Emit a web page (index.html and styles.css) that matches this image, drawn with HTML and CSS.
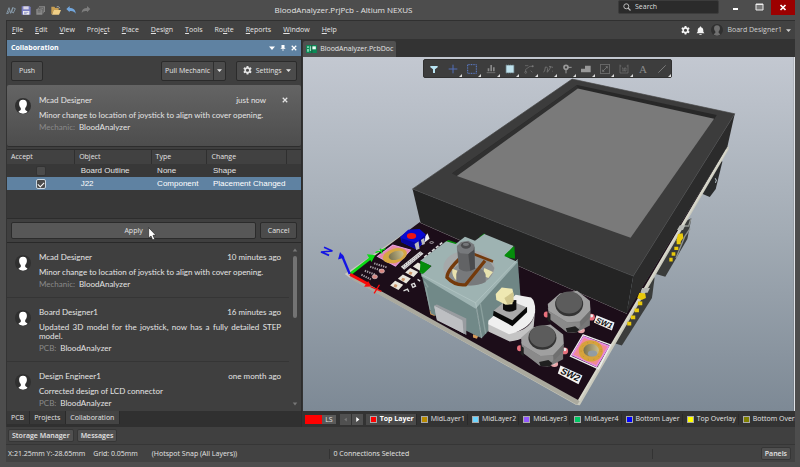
FILE: index.html
```html
<!DOCTYPE html>
<html lang="en">
<head>
<meta charset="utf-8">
<title>BloodAnalyzer.PrjPcb - Altium NEXUS</title>
<link rel="stylesheet" href="styles.css">
</head>
<body>
<svg class="defs" aria-hidden="true">
  <symbol id="person" viewBox="0 0 16 16">
    <path d="M8 1.800c2.500 0 3.900 1.600 3.900 4 0 2-.8 3.300-1.700 4.200v1.800c.3 1 2 1 2.300 2.300a7.500 7.500 0 0 1-9 0c.3-1.300 2-1.300 2.300-2.300V10C4.900 9.100 4.100 7.800 4.100 5.800c0-2.400 1.400-4 3.900-4z"/>
  </symbol>
  <symbol id="gear" viewBox="0 0 16 16">
    <path fill-rule="evenodd" d="M6.500 0h3l.5 2.300 1.500.9 2.300-.8 1.500 2.700-1.800 1.600v1.800l1.800 1.600-1.500 2.700-2.300-.8-1.500.9-.5 2.300h-3L6 12.900l-1.500-.9-2.300.8-1.500-2.700 1.800-1.600V6.700L.7 5.100l1.500-2.700 2.300.8L6 2.300zM8 4.800a2.800 2.800 0 1 0 0 5.600 2.800 2.800 0 0 0 0-5.600z"/>
  </symbol>
  <symbol id="caret" viewBox="0 0 8 8"><path d="M0 2h8L4 6.500z"/></symbol>
  <symbol id="close" viewBox="0 0 8 8"><path d="M1 1l6 6M7 1L1 7" fill="none" stroke="currentColor" stroke-width="1.600"/></symbol>
</svg>

<div class="app">
  <header class="titlebar">
    <div class="quick">
      <svg viewBox="0 0 30 27"><path d="M2 23L9 5l5 17 6-17 8 3-6 13-4-3M2 23l5-1 3-8M20 5l-3 14" fill="none" stroke="#8fa3b5" stroke-width="2.500"/></svg>
      <svg viewBox="0 0 30 27"><path d="M2 1h24l3 3v22H2z" fill="#777bc0"/><path d="M7 1h16v9H7z" fill="#d9d5e6"/><path d="M6 15h19v11H6z" fill="#eee"/><path d="M9 19h13M9 23h8" stroke="#777bc0" stroke-width="2"/></svg>
      <svg viewBox="0 0 30 27"><path d="M9 1h18v17h-4v4h-4v4H1V9h4V5h4z" fill="#8b8b8b"/><path d="M5 9h14v12M9 5h14v12M5 14h9M5 18h9M11 9V5" fill="none" stroke="#444" stroke-width="1.500"/></svg>
      <svg viewBox="0 0 30 27"><path d="M1 2h9l3 4h10v6H8L3 25H1z" fill="#c99f52"/><path d="M8 12h22l-6 14H3z" fill="#f1cf86"/><path d="M17 3c5-3 8 0 9 4" fill="none" stroke="#ddd" stroke-width="2"/></svg>
      <svg viewBox="0 0 30 27"><path d="M1 9L11 0v6c10 0 18 5 18 17-4-7-9-9-18-8v4z" fill="#72a6dc"/></svg>
      <svg viewBox="0 0 30 27"><path d="M28 9L18 0v6C8 6 2 11 2 21c3-5 7-7 16-6v4z" fill="#7d7d7d"/></svg>
    </div>
    <h1 class="title">BloodAnalyzer.PrjPcb - Altium NEXUS</h1>
    <div class="winside">
      <label class="search">
        <svg viewBox="0 0 8 8"><circle cx="3.300" cy="3.300" r="2.500" fill="none" stroke="#bbb"/><path d="M5 5l2.500 2.500" stroke="#bbb" stroke-width="1.300"/></svg>
        <input type="text" placeholder="Search" aria-label="Search">
      </label>
      <button class="win" aria-label="Minimize"><svg viewBox="0 0 24 15"><path d="M10 8h5v2h-5z" fill="#fff"/></svg></button>
      <button class="win" aria-label="Maximize"><svg viewBox="0 0 24 15"><path d="M9 4h7v6H9z" fill="#777" stroke="#eee"/><path d="M9 4.500h7" stroke="#eee"/></svg></button>
      <button class="win win-close" aria-label="Close"><svg viewBox="0 0 24 15"><path d="M9.500 5l5 5m0-5l-5 5" stroke="#fff" stroke-width="1.700"/></svg></button>
    </div>
  </header>

  <nav class="menubar">
    <div class="menus">
      <a href="#"><u>F</u>ile</a><a href="#"><u>E</u>dit</a><a href="#"><u>V</u>iew</a><a href="#">Proje<u>c</u>t</a><a href="#"><u>P</u>lace</a><a href="#"><u>D</u>esign</a><a href="#"><u>T</u>ools</a><a href="#">Ro<u>u</u>te</a><a href="#"><u>R</u>eports</a><a href="#"><u>W</u>indow</a><a href="#"><u>H</u>elp</a>
    </div>
    <div class="account">
      <svg class="ic9" viewBox="0 0 16 16"><use href="#gear"/></svg>
      <svg class="ic9" viewBox="0 0 16 16"><path d="M7 1h2v1c3 .5 4 3 4 6v2l2 3H1l2-3V8c0-3 1-5.500 4-6zM6 14h4v1.500H6z"/></svg>
      <span class="user"><svg class="avatar avatar-sm" viewBox="0 0 16 16"><use href="#person"/></svg>Board Designer1 <svg class="caret" viewBox="0 0 8 8"><use href="#caret"/></svg></span>
    </div>
  </nav>

  <main class="work">
    <section class="panel">
      <header class="panel-head">
        <h2>Collaboration</h2>
        <svg viewBox="0 0 8 8"><use href="#caret"/></svg>
        <svg viewBox="0 0 8 8"><path d="M2 0h4v4h1v1H4.500v3h-1V5H1V4h1z"/></svg>
        <svg viewBox="0 0 8 8"><use href="#close"/></svg>
      </header>
      <div class="tools">
        <button class="btn push">Push</button>
        <span class="split"><button>Pull Mechanic</button><button aria-label="More pull options"><svg class="caret" viewBox="0 0 8 8"><use href="#caret"/></svg></button></span>
        <button class="btn settings"><svg class="ic9" viewBox="0 0 16 16"><use href="#gear"/></svg>Settings<svg class="caret" viewBox="0 0 8 8"><use href="#caret"/></svg></button>
      </div>

      <article class="note current">
        <svg class="avatar" viewBox="0 0 16 16"><use href="#person"/></svg>
        <div class="note-body">
          <div class="note-top"><b>Mcad Designer</b><time>just now</time></div>
          <p>Minor change to location of joystick to align with cover opening.</p>
          <div class="meta"><span>Mechanic:</span>BloodAnalyzer</div>
        </div>
        <button class="dismiss" aria-label="Dismiss"><svg viewBox="0 0 8 8"><use href="#close"/></svg></button>
      </article>

      <div class="changes">
        <table>
          <colgroup><col class="c1"><col class="c2"><col class="c3"><col class="c4"><col class="c5"></colgroup>
          <thead><tr><th>Accept</th><th>Object</th><th>Type</th><th>Change</th><th></th></tr></thead>
          <tbody>
            <tr><td><input type="checkbox" aria-label="Accept Board Outline"></td><td>Board Outline</td><td>None</td><td>Shape</td><td></td></tr>
            <tr class="sel"><td><input type="checkbox" aria-label="Accept J22" checked></td><td>J22</td><td>Component</td><td>Placement Changed</td><td></td></tr>
          </tbody>
        </table>
      </div>
      <div class="actions">
        <button class="btn apply">Apply
          <svg class="cursor" viewBox="0 0 24 42"><path d="M2 2v31l7-6 5 12 6-3-5-11h9z" fill="#fff" stroke="#222" stroke-width="2"/></svg>
        </button>
        <button class="btn cancel">Cancel</button>
      </div>

      <div class="history">
        <div class="notes">
          <article class="note">
            <svg class="avatar" viewBox="0 0 16 16"><use href="#person"/></svg>
            <div class="note-body">
              <div class="note-top"><b>Mcad Designer</b><time>10 minutes ago</time></div>
              <p>Minor change to location of joystick to align with cover opening.</p>
              <div class="meta"><span>Mechanic:</span>BloodAnalyzer</div>
            </div>
          </article>
          <article class="note">
            <svg class="avatar" viewBox="0 0 16 16"><use href="#person"/></svg>
            <div class="note-body">
              <div class="note-top"><b>Board Designer1</b><time>16 minutes ago</time></div>
              <p>Updated 3D model for the joystick, now has a fully detailed STEP model.</p>
              <div class="meta"><span>PCB:</span>BloodAnalyzer</div>
            </div>
          </article>
          <article class="note">
            <svg class="avatar" viewBox="0 0 16 16"><use href="#person"/></svg>
            <div class="note-body">
              <div class="note-top"><b>Design Engineer1</b><time>one month ago</time></div>
              <p>Corrected design of LCD connector</p>
              <div class="meta"><span>PCB:</span>BloodAnalyzer</div>
            </div>
          </article>
        </div>
        <div class="scroll">
          <svg viewBox="0 0 8 8"><path d="M1 6h6L4 2z"/></svg>
          <div class="track"><div class="thumb"></div></div>
          <svg viewBox="0 0 8 8"><path d="M1 2h6L4 6z"/></svg>
        </div>
      </div>
      <div class="panel-tabs"><a href="#">PCB</a><a href="#">Projects</a><a href="#" class="on">Collaboration</a></div>
    </section>

    <section class="doc">
      <div class="doc-tabs">
        <a href="#" class="doc-tab"><svg viewBox="0 0 32 24"><path d="M0 0h32v24H0z" fill="#0b8a56"/><path d="M3 4h5v5H3zM3 12h5v8H3zM11 4h4v14h-4z" fill="#8fe0bd"/><path d="M18 4h11v9H18z" fill="#eafff5"/><path d="M17 0v24" stroke="#25402f" stroke-width="2"/></svg>BloodAnalyzer.PcbDoc</a>
      </div>
      <div class="view">
        <svg class="scene" viewBox="9 -39 1470 1062" preserveAspectRatio="xMidYMid slice" role="img" aria-label="3D board view">
          <defs>
            <linearGradient id="sky" x1="0" y1="0" x2="0" y2="1"><stop offset="0" stop-color="#c3c8d1"/><stop offset=".5" stop-color="#a2abb4"/><stop offset="1" stop-color="#7d8995"/></linearGradient>
            <linearGradient id="hole" x1="0" y1="0" x2="1" y2="0"><stop offset="0" stop-color="#77704e"/><stop offset="1" stop-color="#c9bd8c"/></linearGradient>
            <g id="button">
              <ellipse cx="-66" cy="27" rx="8" ry="9" fill="#e8707c"/><ellipse cx="68" cy="35" rx="11" ry="10" fill="#e8707c"/><ellipse cx="38" cy="74" rx="11" ry="9" fill="#e8a4a8"/><circle cx="69" cy="31" r="5" fill="#eee"/><circle cx="36" cy="71" r="5" fill="#eee"/>
              <path d="M-62 8l8 30 46 40 30 4 42-22V-8z" fill="#777"/>
              <path d="M-62-4l36-32 52-8 38 30 2 28-32 34-38 2-56-34z" fill="#a0a0a0"/>
              <path d="M-60 16l56 34v30l-54-40zM-4 50h38v14L18 82-4 80z" fill="#8a8a8a"/>
              <path d="M34 48l32-34v20L38 62z" fill="#6f6f6f"/>
              <path d="M-63 18l9 8v26l-9-8zM-8 68l28-6 12 10-8 10-28-2z" fill="#202020"/>
              <ellipse cx="2" cy="-4" rx="42" ry="36" fill="#343434"/><ellipse cx="2" cy="-9" rx="39" ry="33" fill="#5c5c5c"/>
            </g>
          </defs>
          <path d="M9-39h1470v1062H9z" fill="url(#sky)"/>
          <!-- parts mounted under the board -->
          <path d="M1265 275l-20 82-18 24-28-12 56-96z" fill="#292b2c"/><path d="M1243 325l4 6-3 8" stroke="#aebbc2" stroke-width="3" fill="none"/>
          <path d="M1172 445l-12 62-66 113-28-8 70-150z" fill="#3a3c3b"/><path d="M1128 468h36l6-20M1168 476l-16 24-26 64" stroke="#8d918e" stroke-width="4" fill="none"/>
          <path d="M1062 622l-8 62-90 142-32-10 80-170z" fill="#3b3d3c"/>
          <path d="M134 612L361 456l620 274L1283 226l1 12L838 1005l-12-2L150 624z" fill="#c9c9bd"/>
          <path d="M150 625l680 378 8-12L150 612z" fill="#aaa99e"/>
          <path d="M150 612L359 456l620 270L1281 228l-14 26L834 990z" fill="#1c0d19"/>
          <path d="M359 457l620 273" stroke="#d0cccf" stroke-width="2"/>
          <path d="M1278 238L835 991" stroke="#d7d7cb" stroke-width="6"/>
          <path d="M1130 466h24l-7 14h-22zM1024 654h24l-7 14h-22z" fill="#b8bab5"/>
          <g fill="#e9c90b"><path d="M1132 492l14-2 2 14-9 12-12-3zM1016 668l18 2 2 14-13 6-13-6z"/><path d="M1128 513h12v10h-12zM1121 530h12v10h-12zM1113 547h11v10h-11zM1106 563h10v11h-10zM1012 694h13v11h-13zM1002 715h13v11h-13zM991 736h13v11h-13zM980 755h12v11h-12z"/></g>
          <!-- display housing -->
          <path d="M337 357l661 261-20 112-617-272z" fill="#242424"/>
          <path d="M998 618l304-486-22 98-302 500z" fill="#2b2b2b"/>
          <path d="M337 357L815 28l487 104-304 486z" fill="#3c3c3c"/>
          <path d="M337 357L815 28l487 104-304 486z" fill="none" stroke="#484848" stroke-width="2"/>
          <path d="M455 311L830 46l418 90-8 13z" fill="#282828"/>
          <path d="M455 311L830 46l2 11-362 261z" fill="#303030"/>
          <path d="M470 318L832 56l408 91-250 356z" fill="#7a7a7a"/>
          <!-- pads and silkscreen -->
          <path d="M232 559l46-34 53 15-45 48z" fill="#e68aa9"/><path d="M232 559l46-34 53 15-45 48z" fill="none" stroke="#e8a0e8" stroke-width="3"/>
          <ellipse cx="284" cy="557" rx="37" ry="21" transform="rotate(-17 284 557)" fill="#d6a742"/><ellipse cx="288" cy="556" rx="23" ry="13" transform="rotate(-17 288 556)" fill="url(#hole)"/>
          <path d="M350 530l32-40 6 16-24 18z" fill="#eee"/>
          <path d="M300 501l24-22 34-2 18 16-2 20-24 26-46-22z" fill="#0909d2"/><path d="M304 505l44 14 26-24v16l-24 26-46-20z" fill="#06069a"/><ellipse cx="334" cy="498" rx="14" ry="9" fill="#ef1414"/>
          <path d="M343 522l12-8 3 22-10 4zM362 510l10-6 2 18-8 3z" fill="#bbb"/>
          <path d="M302 590l58-46 10 7-58 48z" fill="#ddd"/><path d="M308 590l54-42M313 594l50-42" stroke="#40313e" stroke-width="2" stroke-dasharray="4 4"/>
          <g fill="none" stroke="#a79fa5" stroke-width="6" stroke-dasharray="4 3"><path d="M222 580l38 12M210 590l36 12M194 602l32 12M184 614l28 14"/></g>
          <g fill="#d78680" stroke="#ddc7cb" stroke-width="2"><ellipse cx="245" cy="603" rx="8" ry="6"/><ellipse cx="224" cy="620" rx="8" ry="6"/></g>
          <g fill="#e9e5dc"><path d="M270 646l15-14 24 12-14 16zM293 626l15-13 24 12-14 15zM315 607l15-13 24 12-14 15zM338 589l15-12 24 12-14 15z"/></g>
          <g fill="#cc956a"><path d="M284 642l8 3-4 8-8-4zM307 623l8 3-4 8-8-4zM329 604l8 3-4 8-8-4z"/></g>
          <path d="M310 662l12-5 4 8M334 643l8-3 4 8-8 4zM352 628l8 5" fill="none" stroke="#ddd" stroke-width="4"/>
          <path d="M388 518q6-6 12-1-5 6-12 1" fill="none" stroke="#8a8288" stroke-width="3"/><path d="M372 562l54-44" stroke="#ddd" stroke-width="5" stroke-dasharray="10 5"/>
          <!-- axes -->
          <path d="M150 612l62-48" stroke="#0bdb16" stroke-width="8"/><path d="M222 557l-18-2 10 17zM226 548l30-12m-16 0l6 14" fill="#0bdb16" stroke="#0bdb16" stroke-width="4"/>
          <path d="M149 612l-24-57" stroke="#1414e4" stroke-width="7"/><path d="M120 546l-6 22 19-6z" fill="#1414e4"/><path d="M72 532l25 11-34 3 24 10" fill="none" stroke="#1414e4" stroke-width="5"/>
          <path d="M150 613l52 28" stroke="#fa0a0a" stroke-width="9"/><path d="M214 649l-22 1 12-17z" fill="#fa0a0a"/><path d="M212 650l32 14M238 644l-16 26" stroke="#fa0a0a" stroke-width="4"/>
          <!-- joystick -->
          <path d="M432 518l12-8 28 10-20 14zM362 572l30 16-20 24-14-4zM536 502l16-12 8 20zM608 560l28-34 8 40z" fill="#058d0b"/>
          <path d="M388 720l12 4 4 14-14-6zM518 792l16 4-4 10-12-4z" fill="#d59b58"/>
          <path d="M362 606l164 92 18 106-152-74z" fill="#718988"/>
          <path d="M526 698l126-130 8 108-116 128z" fill="#6f8685"/>
          <path d="M362 618l32-30-34-16 78-58 28 8 28-22 30 12 28-20 88 36-28 30 40 18-126 140z" fill="#9eb3b2"/>
          <path d="M360 572l32 15-28 26zM612 556l30-28 2 36z" fill="#058d0b"/>
          <path d="M362 612l164 86 126-130M526 698l18 106" fill="none" stroke="#b6c8c7" stroke-width="2"/>
          <path d="M376 650l14 70M384 652l-12-18M540 700l16 90" stroke="#8ba09e" stroke-width="4"/>
          <ellipse cx="506" cy="593" rx="77" ry="53" fill="#a5a9aa"/><path d="M442 608q0 38 64 38t76-52q-24-40-64-44z" fill="#8b8f90"/>
          <path d="M456 596l16 6-2 30q-16-12-14-36zM552 594l26 12-14 18-18-8z" fill="#e8e2ae"/>
          <path d="M468 614q0-22 42-22t46 22v22q-34 18-88 4z" fill="#77797b"/>
          <path d="M478 566q-38 36-38 56 24 26 56 22l58-72" fill="none" stroke="#743a0b" stroke-width="10"/><path d="M520 552l58 22" stroke="#743a0b" stroke-width="8"/>
          <path d="M470 530l6 66q22 16 48 0l-2-68z" fill="#626365"/><path d="M504 552l6 50 14-6-2-66z" fill="#4a4b4d"/>
          <path d="M470 528l12-12 22-4 18 12-2 16-16 12-24-2-10-10z" fill="#77797c"/><ellipse cx="497" cy="526" rx="15" ry="10" fill="#4b4c4e"/><ellipse cx="497" cy="523" rx="9" ry="5" fill="#75777a"/>
          <path d="M402 706l88 42 8 46-88-44z" fill="#bdbfc2"/><path d="M402 706l8-3 88 42v48l-10-4-2-36z" fill="#989ca0"/><path d="M402 708l84 42 4 40-80-42z" fill="#bdbfc2"/>
          <!-- five-way switch -->
          <path d="M564 756l64 32q72-8 76-68l-4 48q-14 38-72 46l-64-30z" fill="#c4c4c4"/>
          <path d="M564 752l82-78 46 8q14 12 12 44-8 48-78 66l-62-30z" fill="#efefef"/>
          <path d="M580 722l40-34 60 24-44 40z" fill="#a8a8a8"/><path d="M580 722l56 28 44-40v16l-44 42-58-32z" fill="#080808"/>
          <path d="M608 692v26q18 14 40 0v-28z" fill="#0c0c0c"/>
          <path d="M586 672l18-20 32 4 4 18-4 28-20 2-28-14z" fill="#eee8b2"/><path d="M612 684l26-18 2 28-18 10z" fill="#cfc68d"/>
          <!-- push buttons -->
          <use href="#button" x="804" y="706"/><use href="#button" x="724" y="807"/>
          <path d="M848 794l82 30-36 72-84-38z" fill="none" stroke="#eee" stroke-width="4"/><path d="M850 800l74 28-36 60-72-34z" fill="#f28b94"/><path d="M850 800l74 28-36 60-72-34z" fill="none" stroke="#e58be4" stroke-width="5"/>
          <ellipse cx="871" cy="842" rx="36" ry="32" fill="#d7a33c"/><ellipse cx="872" cy="842" rx="30" ry="26" fill="none" stroke="#ae8630" stroke-width="2" stroke-dasharray="3 14"/><ellipse cx="872" cy="840" rx="23" ry="19" fill="url(#hole)"/><ellipse cx="876" cy="850" rx="14" ry="9" fill="#929ca4"/>
          <path d="M888 735l54 22-8 24-54-24zM780 886l66 30-12 26-62-32z" fill="#f2f2f2"/>
          <text class="silk" transform="translate(883 756) rotate(22) skewX(-10)" font-size="24">SW1</text>
          <text class="silk" transform="translate(777 908) rotate(25) skewX(-10)" font-size="28">SW2</text>
        </svg>
        <div class="toolbar">
          <button aria-label="Filter"><svg viewBox="0 0 30 30"><path d="M4 6h22v4l-8 6v11h-6V16l-8-6z" fill="#b9e4f3"/></svg></button>
          <button class="m" aria-label="Move"><svg viewBox="0 0 30 30"><path d="M15 2v26M2 15h26" stroke="#526fb8" stroke-width="3"/></svg></button>
          <button class="m" aria-label="Select"><svg viewBox="0 0 30 30"><path d="M2 2h26v26H2z" fill="none" stroke="#5d7fd0" stroke-width="3" stroke-dasharray="3 2"/></svg></button>
          <button class="m" aria-label="Align"><svg viewBox="0 0 30 30"><path d="M2 26h26" stroke="#888" stroke-width="2"/><path d="M5 13h5v9H5zM13 3h5v19h-5zM21 10h5v12h-5z" fill="#888"/></svg></button>
          <button class="m" aria-label="Component"><svg viewBox="0 0 30 30"><path d="M5 1v28M11 1v28M17 1v28M24 1v28M0 6h30M0 12h30M0 18h30M0 24h30" stroke="#66808a" stroke-width="2"/><path d="M4 4h22v22H4z" fill="#bfe2ed"/></svg></button>
          <button class="m" aria-label="Route"><svg viewBox="0 0 30 30"><path d="M5 25V16L18 7h9M3 5h10M20 20l5 5" fill="none" stroke="#777" stroke-width="2"/><circle cx="5" cy="25" r="3" fill="none" stroke="#777" stroke-width="2"/><circle cx="26" cy="7" r="3" fill="#777"/></svg></button>
          <button class="m" aria-label="Tune"><svg viewBox="0 0 30 30"><path d="M1 24q5 0 5-9t5-6 2 12 5-3 2-11 6 2 3 14" fill="none" stroke="#777" stroke-width="2.500"/></svg></button>
          <button class="m" aria-label="Via"><svg viewBox="0 0 30 30"><circle cx="12" cy="10" r="6" fill="none" stroke="#999" stroke-width="5"/><path d="M12 16v12M18 10h11" stroke="#999" stroke-width="3"/></svg></button>
          <button class="m" aria-label="Polygon"><svg viewBox="0 0 30 30"><path d="M0 14h12V5h17v20H0z" fill="#999"/></svg></button>
          <button class="m" aria-label="Room"><svg viewBox="0 0 30 30"><path d="M1 1h28v28H1zM8 22L22 8M8 17v5h5M17 8h5v5" fill="none" stroke="#888" stroke-width="2"/></svg></button>
          <button class="m" aria-label="Dimension"><svg viewBox="0 0 30 30"><path d="M3 2v25h24V2M3 6h4M23 6h4M9 12h3v9M16 12h5v9h-5zM10 21h4" fill="none" stroke="#777" stroke-width="2"/></svg></button>
          <button class="letter" aria-label="Text">A</button>
          <button class="m" aria-label="Line"><svg viewBox="0 0 30 30"><path d="M4 26L26 4" stroke="#999" stroke-width="2"/></svg></button>
        </div>
      </div>
      <div class="layers">
        <button class="ls"><i></i><span>LS</span></button>
        <span class="arrows"><button aria-label="Previous layer"><svg viewBox="0 0 8 8"><path d="M6 1v6L2 4z" fill="#777"/></svg></button><button aria-label="Next layer"><svg viewBox="0 0 8 8"><path d="M2 0v8l5-4z" fill="#fff"/></svg></button></span>
        <a href="#" class="on"><i class="k-red"></i>Top Layer</a>
        <a href="#"><i class="k-gold"></i>MidLayer1</a>
        <a href="#"><i class="k-sky"></i>MidLayer2</a>
        <a href="#"><i class="k-violet"></i>MidLayer3</a>
        <a href="#"><i class="k-green"></i>MidLayer4</a>
        <a href="#"><i class="k-blue"></i>Bottom Layer</a>
        <a href="#"><i class="k-yellow"></i>Top Overlay</a>
        <a href="#"><i class="k-olive"></i>Bottom Overlay</a>
      </div>
    </section>
  </main>

  <div class="taskbar"><button class="chip">Storage Manager</button><button class="chip">Messages</button></div>
  <footer class="status">
    <div class="coords"><span>X:21.25mm Y:-28.65mm</span><span>Grid: 0.05mm</span><span class="snap">(Hotspot Snap (All Layers))</span></div>
    <div class="conn">0 Connections Selected</div>
    <div class="end"><button class="chip">Panels</button></div>
  </footer>
</div>
</body>
</html>
```

FILE: styles.css
```css
* { box-sizing: border-box; }
body {
  margin: 0;
  background: #4d4d4d;
  color: #e4e4e4;
  font: 7px/10px "Open Sans", "Noto Sans", sans-serif;
}
button, input { font: inherit; color: inherit; margin: 0; padding: 0; border: 0; background: none; }
a { color: inherit; text-decoration: none; }
h1, h2, p { margin: 0; font-size: inherit; font-weight: 400; }
svg { display: block; fill: currentColor; flex: none; }
.defs { display: none; }
.app {
  display: grid;
  grid-template-rows: 20px 19px minmax(0, 1fr) 18px 17px;
  height: 100vh;
  padding: 0 5px 5px 6px;
}

/* title bar */
.titlebar { display: grid; grid-template-columns: auto 1fr auto; align-items: center; font-size: 8px; }
.title { padding-right: 22px; text-align: center; }
.quick { display: flex; gap: 5px; }
.quick svg { width: 10px; height: 9px; }
.winside { display: flex; justify-content: flex-end; align-items: flex-start; height: 20px; }
.search {
  display: flex; align-items: center; gap: 4px;
  width: 101px; height: 14px; margin-right: 4px; padding-left: 4px;
  background: #2b2b2b; border: 1px solid #3c3c3c; border-radius: 2px;
}
.search svg { width: 8px; height: 8px; }
.search input { flex: 1; min-width: 0; font-size: 7px; outline: 0; }
.search input::placeholder { color: #dedede; }
.win { width: 24px; height: 15px; }
.win-close { background: #9c0000; }

/* menu bar */
.menubar {
  display: flex; justify-content: space-between; align-items: center;
  padding: 0 4px 0 5px;
  background: #424242; border-top: 1px solid #303030; border-left: 1px solid #303030;
}
.menus { display: flex; gap: 12px; }
.account { display: flex; align-items: center; gap: 6px; color: #f4f4f4; }
.user { display: flex; align-items: center; gap: 4px; color: #d0d0d0; }
.ic9 { width: 9px; height: 9px; }
.caret { width: 5px; height: 5px; }
.avatar { width: 16px; height: 16px; border-radius: 50%; background: #303030; color: #fff; }
.avatar-sm { width: 12px; height: 12px; color: #707070; }

/* work area */
.work {
  display: grid; grid-template-columns: 3fr 5fr; gap: 1px;
  min-height: 0; padding-left: 1px; background: #333;
}
.panel, .doc { display: flex; flex-direction: column; min-width: 0; min-height: 0; }
.panel { background: #3f3f3f; padding-top: 1px; border-right: 1px solid #2c2c2c; }
.panel-head {
  display: flex; align-items: center; gap: 5px; flex: none;
  height: 16px; padding: 0 4px; background: #5f82a2; color: #fff;
}
.panel-head h2 { flex: 1; font-weight: 700; }
.panel-head svg { width: 6px; height: 6px; }
.tools { display: flex; align-items: center; flex: none; height: 29px; padding: 0 4px; }
.btn, .split {
  background: #4b4b4b; border: 1px solid #2b2b2b; border-radius: 2px; height: 20px;
}
.push { width: 32px; }
.split { display: flex; margin: 0 10px 0 auto; }
.split button { padding: 0 3px; }
.split button + button { border-left: 1px solid #2f2f2f; }
.settings { display: flex; align-items: center; justify-content: center; gap: 4px; width: 61px; }

.note { display: flex; gap: 8px; padding: 9px 12px 8px 8px; border-bottom: 1px solid #353535; }
.note-body { flex: 1; min-width: 0; font: 8px/9px Lato, "Open Sans", sans-serif; }
.note-top { display: flex; justify-content: space-between; line-height: 10px; }
.note b { font-weight: 400; }
.note p { margin: 6px 0 3px; text-align: justify; }
.note .avatar { margin-top: 3px; }
.meta span { color: #8a8a8a; margin-right: 4px; }
.current {
  flex: none; position: relative; padding: 10px 35px 14px 8px;
  background: linear-gradient(#646464, #4d4d4d); border: 0; border-radius: 2px;
  box-shadow: 0 1px #2d2d2d;
}
.current p { white-space: nowrap; }
.dismiss { position: absolute; top: 12px; right: 13px; }
.dismiss svg { width: 6px; height: 6px; }

.changes {
  flex: none; height: 70px; margin-top: 3px; background: #383838;
  border-top: 1px solid #2c2c2c; border-bottom: 1px solid #2c2c2c;
}
table { width: 100%; table-layout: fixed; border-collapse: collapse; }
.c1 { width: 23%; } .c2 { width: 26%; } .c3 { width: 19%; } .c4 { width: 27%; } .c5 { width: 5%; }
th { height: 14px; padding: 0 4px; text-align: left; font-weight: 400; background: #414141; border-right: 1px solid #2f2f2f; }
th:last-child { border: 0; }
td { height: 13px; padding: 0 0 0 6px; white-space: nowrap; font-family: "Liberation Sans", Arial, sans-serif; font-size: 8px; }
td:first-child { padding: 0; text-align: center; }
.sel { background: #5f82a2; color: #fff; }
input[type="checkbox"] {
  appearance: none; display: block; width: 10px; height: 10px; margin: 0 auto;
  background: #4b4b4b; border: 1px solid #333; border-radius: 2px;
}
input[type="checkbox"]:checked { border-color: #ccd8e2; display: grid; place-items: center; }
input[type="checkbox"]:checked::before {
  content: ""; width: 5px; height: 3px; border: solid #fff; border-width: 0 0 1px 1px; transform: rotate(-45deg);
}
.actions { display: flex; gap: 4px; flex: none; height: 23px; padding: 3px 4px; }
.actions .btn { height: 17px; }
.apply { position: relative; flex: 1; background: #575757; }
.cancel { width: 37px; }
.cursor { position: absolute; left: 56%; top: 4px; width: 8px; height: 14px; }

.history { display: flex; flex: 1; min-height: 0; border-top: 1px solid #292929; }
.notes { flex: 1; min-width: 0; overflow: hidden; }
.notes .note { padding-right: 8px; }
.scroll { display: flex; flex-direction: column; align-items: center; gap: 3px; width: 12px; padding: 4px 0; color: #777; }
.scroll svg { width: 6px; height: 6px; }
.track { flex: 1; width: 4px; }
.thumb { height: 44%; border-radius: 2px; background: #737373; }
.panel-tabs { display: flex; flex: none; height: 16px; background: #303030; }
.panel-tabs a { display: flex; align-items: center; height: 13px; padding: 0 5px 0 4px; background: #383838; border-right: 1px solid #2a2a2a; }
.panel-tabs .on { background: #444; }

/* document */
.doc-tabs { display: flex; flex: none; height: 18px; padding-top: 2px; }
.doc-tab { display: flex; align-items: center; gap: 3px; padding: 0 3px; background: #505050; border-radius: 2px 2px 0 0; }
.doc-tab svg { width: 11px; height: 8px; }
.view { position: relative; flex: 1; min-height: 0; overflow: hidden; border-right: 1px solid #e0e3e8; }
.scene { width: 100%; height: 100%; }
.silk { font-family: "Liberation Sans", Arial, sans-serif; font-weight: 700; fill: #111; }
.toolbar {
  position: absolute; top: 2px; left: 24.5%; display: flex; align-items: center;
  height: 19px; background: #3d3d3d; border: 1px solid #303030; border-radius: 2px;
}
.toolbar button { position: relative; display: grid; place-items: center; width: 19px; height: 17px; }
.toolbar svg { width: 10px; height: 10px; }
.toolbar .m::after {
  content: ""; position: absolute; right: 0; bottom: 0; border-left: 3px solid transparent; border-bottom: 3px solid #ddd;
}
.toolbar .letter { font: 11px/12px "Liberation Serif", serif; color: #8a8a8a; }
.layers { display: flex; flex: none; align-items: center; height: 16px; padding-left: 2px; overflow: hidden; white-space: nowrap; background: #333; }
.layers a { display: flex; align-items: center; gap: 3px; flex: none; height: 11px; padding: 0 2px 0 4px; border-right: 1px solid #2a2a2a; }
.layers .on { background: #4a4a4a; font-weight: 700; color: #fff; }
.layers a i { width: 7px; height: 7px; border: 1px solid #aaa; }
.ls { display: flex; flex: none; height: 9px; line-height: 9px; background: #5a5a5a; }
.ls i { width: 17px; background: #f00; }
.ls span { padding: 0 3px; }
.arrows { display: flex; flex: none; gap: 1px; margin: 0 3px 0 4px; }
.arrows button { display: grid; place-items: center; width: 11px; height: 11px; background: #505050; }
.arrows svg { width: 5px; height: 5px; }
.k-red { background: #f00; } .k-gold { background: #b88a00; } .k-sky { background: #6cd4ff; }
.k-violet { background: #9358ff; } .k-green { background: #00c864; } .k-blue { background: #00f; }
.k-yellow { background: #ff0; } .k-olive { background: #808000; }

/* bottom bars */
.taskbar { display: flex; align-items: center; gap: 3px; padding-left: 2px; background: #404040; border-bottom: 1px solid #363636; }
.chip { height: 13px; padding: 0 3px; line-height: 11px; background: #505050; border: 1px solid #363636; border-radius: 2px; font-weight: 600; }
.status { display: grid; grid-template-columns: 41% 41% 18%; align-items: center; background: #424242; }
.coords { display: flex; gap: 8px; padding-left: 2px; }
.snap { margin-left: 6px; }
.conn { padding-left: 3px; border-left: 1px solid #333; border-right: 1px solid #333; }
.end { display: flex; justify-content: flex-end; padding-right: 4px; }
```
